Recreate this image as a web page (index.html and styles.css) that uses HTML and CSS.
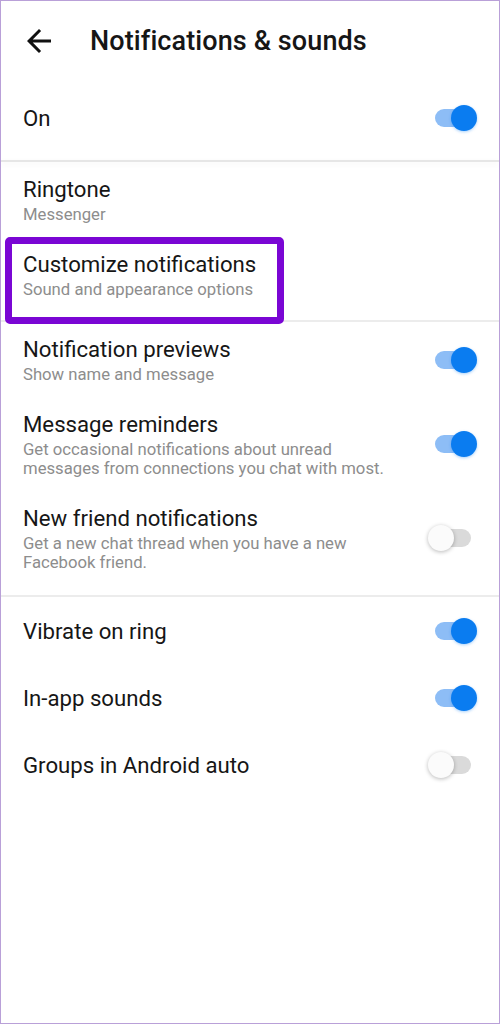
FILE: index.html
```html
<!DOCTYPE html>
<html lang="en">
<head>
  <meta charset="UTF-8" />
  <title>Notifications &amp; sounds</title>
  <link rel="stylesheet" href="styles.css">
</head>
<body>
  <div class="screen">

    <header class="toolbar">
      <svg class="back" viewBox="0 0 24 24" width="36" height="36">
        <path d="M20 11H7.83l5.59-5.59L12 4l-8 8 8 8 1.41-1.41L7.83 13H20v-2z" fill="#111"/>
      </svg>
      <h1>Notifications &amp; sounds</h1>
    </header>

    <div class="master">
      <span class="title">On</span>
      <span class="switch on"></span>
    </div>
    <div class="divider heavy"></div>

    <section class="group">
      <div class="item">
        <div class="text">
          <div class="title">Ringtone</div>
          <div class="sub">Messenger</div>
        </div>
      </div>
      <div class="item marked">
        <div class="text">
          <div class="title">Customize notifications</div>
          <div class="sub">Sound and appearance options</div>
        </div>
        <span class="mark"></span>
      </div>
    </section>
    <div class="divider"></div>

    <section class="group">
      <div class="item">
        <div class="text">
          <div class="title">Notification previews</div>
          <div class="sub">Show name and message</div>
        </div>
        <span class="switch on"></span>
      </div>
      <div class="item">
        <div class="text">
          <div class="title">Message reminders</div>
          <div class="sub">Get occasional notifications about unread<br>messages from connections you chat with most.</div>
        </div>
        <span class="switch on"></span>
      </div>
      <div class="item">
        <div class="text">
          <div class="title">New friend notifications</div>
          <div class="sub">Get a new chat thread when you have a new<br>Facebook friend.</div>
        </div>
        <span class="switch"></span>
      </div>
    </section>
    <div class="divider"></div>

    <section class="plain">
      <div class="row">
        <span class="title">Vibrate on ring</span>
        <span class="switch on"></span>
      </div>
      <div class="row">
        <span class="title">In-app sounds</span>
        <span class="switch on"></span>
      </div>
      <div class="row">
        <span class="title">Groups in Android auto</span>
        <span class="switch"></span>
      </div>
    </section>

  </div>
</body>
</html>
```

FILE: styles.css
```css
* {
  box-sizing: border-box;
}

body {
  margin: 0;
  background: #fff;
  font-family: Roboto, "Noto Sans", sans-serif;
  color: #161616;
}

.screen {
  width: 500px;
  height: 1024px;
  border: 1px solid #b9a0d8;
  overflow: hidden;
}

.toolbar {
  height: 79px;
  display: flex;
  align-items: center;
}

.back {
  margin-left: 20px;
  flex: none;
}

.toolbar h1 {
  margin: 0 0 0 33px;
  font-size: 27px;
  font-weight: 500;
  letter-spacing: 0.1px;
}

.title {
  font-size: 22.2px;
  line-height: 28px;
}

.sub {
  margin-top: 2px;
  font-size: 16.7px;
  line-height: 19px;
  color: #8d8d8d;
}

.master {
  height: 80px;
  padding: 0 22px 4px 22px;
  display: flex;
  align-items: center;
  justify-content: space-between;
}

.divider {
  height: 2px;
  background: #ececec;
}

.divider.heavy {
  background: #e6e6e6;
  box-shadow: 0 2px 6px rgba(0, 0, 0, 0.06);
}

.group {
  padding-bottom: 8px;
}

.group + .divider + .group {
  padding-bottom: 10px;
}

.item {
  padding: 13px 22px;
  display: flex;
  align-items: center;
  justify-content: space-between;
}

.marked {
  position: relative;
}

/* purple callout drawn over the row */
.mark {
  position: absolute;
  left: 4px;
  top: 0;
  width: 279px;
  height: 87px;
  border: 7px solid #7a06d4;
  border-radius: 5px;
}

.row {
  height: 67px;
  padding: 0 22px;
  display: flex;
  align-items: center;
  justify-content: space-between;
}

.switch {
  position: relative;
  flex: none;
  width: 36px;
  height: 18px;
  margin-right: 6px;
  border-radius: 9px;
  background: #dadada;
}

.switch::after {
  content: "";
  position: absolute;
  top: -4px;
  left: -7px;
  width: 26px;
  height: 26px;
  border-radius: 50%;
  background: #fbfbfb;
  box-shadow: 0 1px 4px rgba(0, 0, 0, 0.28);
}

.switch.on {
  background: #8dbdf6;
}

.switch.on::after {
  left: auto;
  right: -6px;
  background: #0a7cf0;
  box-shadow: 0 1px 3px rgba(10, 124, 240, 0.35);
}
```
